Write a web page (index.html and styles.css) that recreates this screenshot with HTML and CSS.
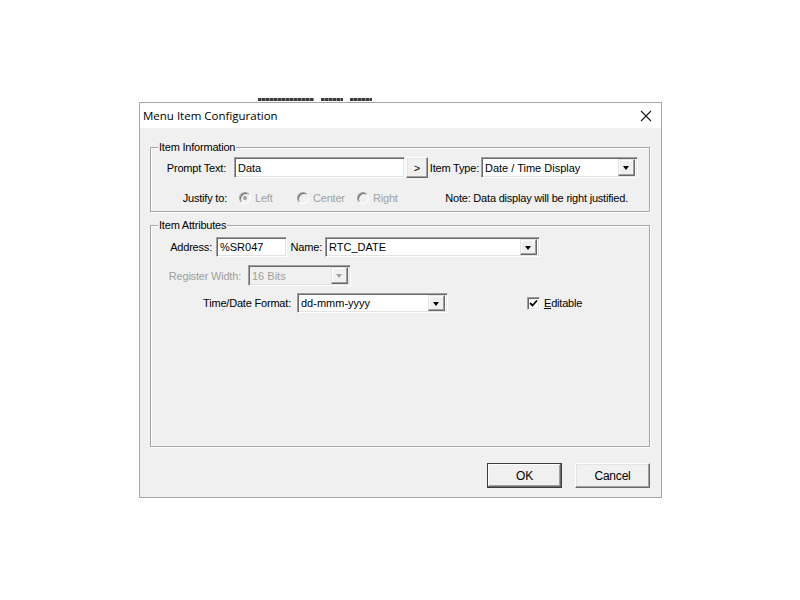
FILE: index.html
```html
<!DOCTYPE html>
<html lang="en">
<head>
    <meta charset="UTF-8" />
    <title>Menu Item Configuration</title>
    <link rel="stylesheet" href="styles.css">
</head>
<body>
    <div class="desk">
        <!-- spodek okna pod dialogem -->
        <div class="behind">
            <span class="blob blob-1"></span>
            <span class="blob blob-2"></span>
            <span class="blob blob-3"></span>
        </div>

        <div class="dialog">
            <div class="titlebar">
                <span class="title">Menu Item Configuration</span>
                <svg class="close" width="12" height="12" viewBox="0 0 12 12">
                    <path d="M1 1 L11 11 M11 1 L1 11" stroke="#1a1a1a" stroke-width="1.1" fill="none" />
                </svg>
            </div>

            <div class="client">
                <div class="group group-info">
                    <span class="group-title">Item Information</span>

                    <div class="row row-prompt">
                        <span class="lbl lbl-prompt">Prompt Text:</span>
                        <div class="edit edit-prompt">Data</div>
                        <button class="btn-small">&gt;</button>
                        <span class="lbl lbl-type">Item Type:</span>
                        <div class="edit combo combo-type">
                            <span class="combo-text">Date / Time Display</span>
                            <span class="drop"></span>
                        </div>
                    </div>

                    <div class="row row-justify">
                        <span class="lbl lbl-justify">Justify to:</span>
                        <span class="radio checked"></span><span class="opt opt-left">Left</span>
                        <span class="radio"></span><span class="opt opt-center">Center</span>
                        <span class="radio"></span><span class="opt">Right</span>
                        <span class="note">Note: Data display will be right justified.</span>
                    </div>
                </div>

                <div class="group group-attr">
                    <span class="group-title">Item Attributes</span>

                    <div class="row row-address">
                        <span class="lbl lbl-address">Address:</span>
                        <div class="edit edit-address">%SR047</div>
                        <span class="lbl lbl-name">Name:</span>
                        <div class="edit combo combo-name">
                            <span class="combo-text">RTC_DATE</span>
                            <span class="drop"></span>
                        </div>
                    </div>

                    <div class="row row-width">
                        <span class="lbl lbl-width disabled">Register Width:</span>
                        <div class="edit combo combo-width disabled">
                            <span class="combo-text">16 Bits</span>
                            <span class="drop"></span>
                        </div>
                    </div>

                    <div class="row row-format">
                        <span class="lbl lbl-format">Time/Date Format:</span>
                        <div class="edit combo combo-format">
                            <span class="combo-text">dd-mmm-yyyy</span>
                            <span class="drop"></span>
                        </div>
                        <span class="check">
                            <svg width="9" height="9" viewBox="0 0 9 9">
                                <path d="M1 4 L3.5 6.5 L8 1.5" stroke="#000" stroke-width="1.8" fill="none" />
                            </svg>
                        </span>
                        <span class="check-label"><u>E</u>ditable</span>
                    </div>
                </div>

                <div class="buttons">
                    <button class="btn btn-default">OK</button>
                    <button class="btn">Cancel</button>
                </div>
            </div>
        </div>
    </div>
</body>
</html>
```

FILE: styles.css
```css
body {
    margin: 0;
    background-color: #fff;
    font-family: "Liberation Sans", Arial, sans-serif;
    font-size: 11px;
    letter-spacing: -0.2px;
    color: #000;
}

.desk {
    position: relative;
    width: 800px;
    height: 600px;
}

/* okno pod dialogem, vidime jen kousek */
.behind {
    position: absolute;
    left: 258px;
    top: 98px;
    display: flex;
    gap: 7px;
}

.blob {
    height: 3px;
    background: repeating-linear-gradient(90deg, #3a3a3a 0 3px, #8a8a8a 3px 4px);
}

.blob-1 {
    width: 56px;
}

.blob-2 {
    width: 22px;
}

.blob-3 {
    width: 22px;
}

/* Okno dialogu */
.dialog {
    position: absolute;
    left: 139px;
    top: 102px;
    width: 523px;
    height: 396px;
    box-sizing: border-box;
    border: 1px solid #a7a7a7;
    display: flex;
    flex-direction: column;
}

.titlebar {
    height: 25px;
    background-color: #fff;
    display: flex;
    align-items: center;
    padding-left: 3px;
    padding-right: 9px;
}

.title {
    flex: 1;
    font-family: "Open Sans", "Liberation Sans", sans-serif;
    font-size: 11.5px;
    letter-spacing: 0;
    color: #000;
}

.close {
    margin-top: 1px;
}

.client {
    flex: 1;
    background-color: #f0f0f0;
    padding: 19px 11px 0 10px;
}

/* Group box */
.group {
    position: relative;
    box-sizing: border-box;
    border: 1px solid #a5a5a5;
    box-shadow: inset 1px 1px 0 #fff, 1px 1px 0 #fff;
}

.group-info {
    height: 65px;
    padding-top: 9px;
}

.group-attr {
    height: 222px;
    margin-top: 13px;
    padding-top: 11px;
}

.group-title {
    position: absolute;
    top: -7px;
    left: 7px;
    padding: 0 1px;
    background-color: #f0f0f0;
    line-height: 13px;
}

.row {
    display: flex;
    align-items: center;
}

.lbl {
    box-sizing: border-box;
    text-align: right;
    white-space: nowrap;
}

.disabled {
    color: #a0a0a0;
}

/* Item Information */
.row-prompt {
    height: 21px;
}

.lbl-prompt {
    width: 83px;
    padding-right: 8px;
}

.edit {
    box-sizing: border-box;
    height: 21px;
    background-color: #fff;
    border: 1px solid;
    border-color: #a0a0a0 #fff #fff #a0a0a0;
    box-shadow: inset 1px 1px 0 #696969, inset -1px -1px 0 #e3e3e3;
    padding: 0 3px;
    display: flex;
    align-items: center;
    white-space: nowrap;
    letter-spacing: 0;
}

.edit-prompt {
    width: 171px;
}

.btn-small {
    box-sizing: border-box;
    width: 22px;
    height: 21px;
    margin-left: 1px;
    padding: 0;
    font: inherit;
    background-color: #f0f0f0;
    border: 1px solid;
    border-color: #fff #696969 #696969 #fff;
    box-shadow: inset -1px -1px 0 #a0a0a0, inset 1px 1px 0 #e3e3e3;
}

.lbl-type {
    width: 53px;
    padding-right: 2px;
}

.combo {
    padding-right: 2px;
}

.combo-text {
    flex: 1;
}

.drop {
    position: relative;
    box-sizing: border-box;
    width: 17px;
    height: 17px;
    background-color: #f0f0f0;
    border: 1px solid;
    border-color: #e3e3e3 #696969 #696969 #e3e3e3;
    box-shadow: inset -1px -1px 0 #a0a0a0, inset 1px 1px 0 #fff;
}

.drop::after {
    content: "";
    position: absolute;
    left: 4px;
    top: 6px;
    border-top: 4px solid #000;
    border-left: 3.5px solid transparent;
    border-right: 3.5px solid transparent;
}

.combo-type {
    width: 157px;
}

.row-justify {
    height: 16px;
    margin-top: 12px;
}

.lbl-justify {
    width: 83px;
    padding-right: 7px;
}

.radio {
    position: relative;
    box-sizing: border-box;
    width: 12px;
    height: 12px;
    margin-left: 5px;
    border-radius: 50%;
    border: 1px solid;
    border-color: #a0a0a0 #fff #fff #a0a0a0;
    box-shadow: inset 1px 1px 0 #696969;
    background-color: #f0f0f0;
}

.radio.checked::after {
    content: "";
    position: absolute;
    left: 3px;
    top: 3px;
    width: 4px;
    height: 4px;
    border-radius: 50%;
    background-color: #a0a0a0;
}

.opt {
    color: #a0a0a0;
    margin-left: 4px;
}

.opt-left {
    width: 37px;
}

.opt-center {
    width: 39px;
}

.note {
    margin-left: auto;
    margin-right: 21px;
}

/* Item Attributes */
.row-address {
    height: 20px;
}

.row-address .edit {
    height: 20px;
}

.lbl-address {
    width: 65px;
    padding-right: 4px;
}

.edit-address {
    width: 71px;
}

.lbl-name {
    width: 38px;
    padding-right: 3px;
}

.combo-name {
    width: 215px;
}

.combo-name .drop,
.combo-format .drop {
    height: 16px;
}

.row-width {
    height: 21px;
    margin-top: 8px;
}

.lbl-width {
    width: 97px;
    padding-right: 7px;
}

.combo-width {
    width: 103px;
    background-color: #f0f0f0;
}

.combo-width .drop::after {
    border-top-color: #a0a0a0;
}

.row-format {
    height: 20px;
    margin-top: 7px;
}

.row-format .edit {
    height: 20px;
}

.lbl-format {
    width: 146px;
    padding-right: 6px;
}

.combo-format {
    width: 151px;
}

.check {
    box-sizing: border-box;
    width: 13px;
    height: 13px;
    margin-left: 79px;
    background-color: #fff;
    border: 1px solid;
    border-color: #a0a0a0 #fff #fff #a0a0a0;
    box-shadow: inset 1px 1px 0 #696969, inset -1px -1px 0 #e3e3e3;
    display: flex;
    align-items: center;
    justify-content: center;
}

.check-label {
    margin-left: 4px;
}

/* OK / Cancel */
.buttons {
    display: flex;
    justify-content: flex-end;
    gap: 13px;
    margin-top: 16px;
}

.btn {
    box-sizing: border-box;
    width: 75px;
    height: 25px;
    padding: 0;
    font-family: "Liberation Sans", Arial, sans-serif;
    font-size: 12px;
    letter-spacing: -0.2px;
    color: #000;
    background-color: #f0f0f0;
    border: 1px solid;
    border-color: #fff #696969 #696969 #fff;
    box-shadow: inset -1px -1px 0 #a0a0a0, inset 1px 1px 0 #e3e3e3;
}

.btn-default {
    border: 1px solid #3c3c3c;
    box-shadow: inset -1px -1px 0 #696969, inset 1px 1px 0 #fff, inset -2px -2px 0 #a0a0a0;
}
```
